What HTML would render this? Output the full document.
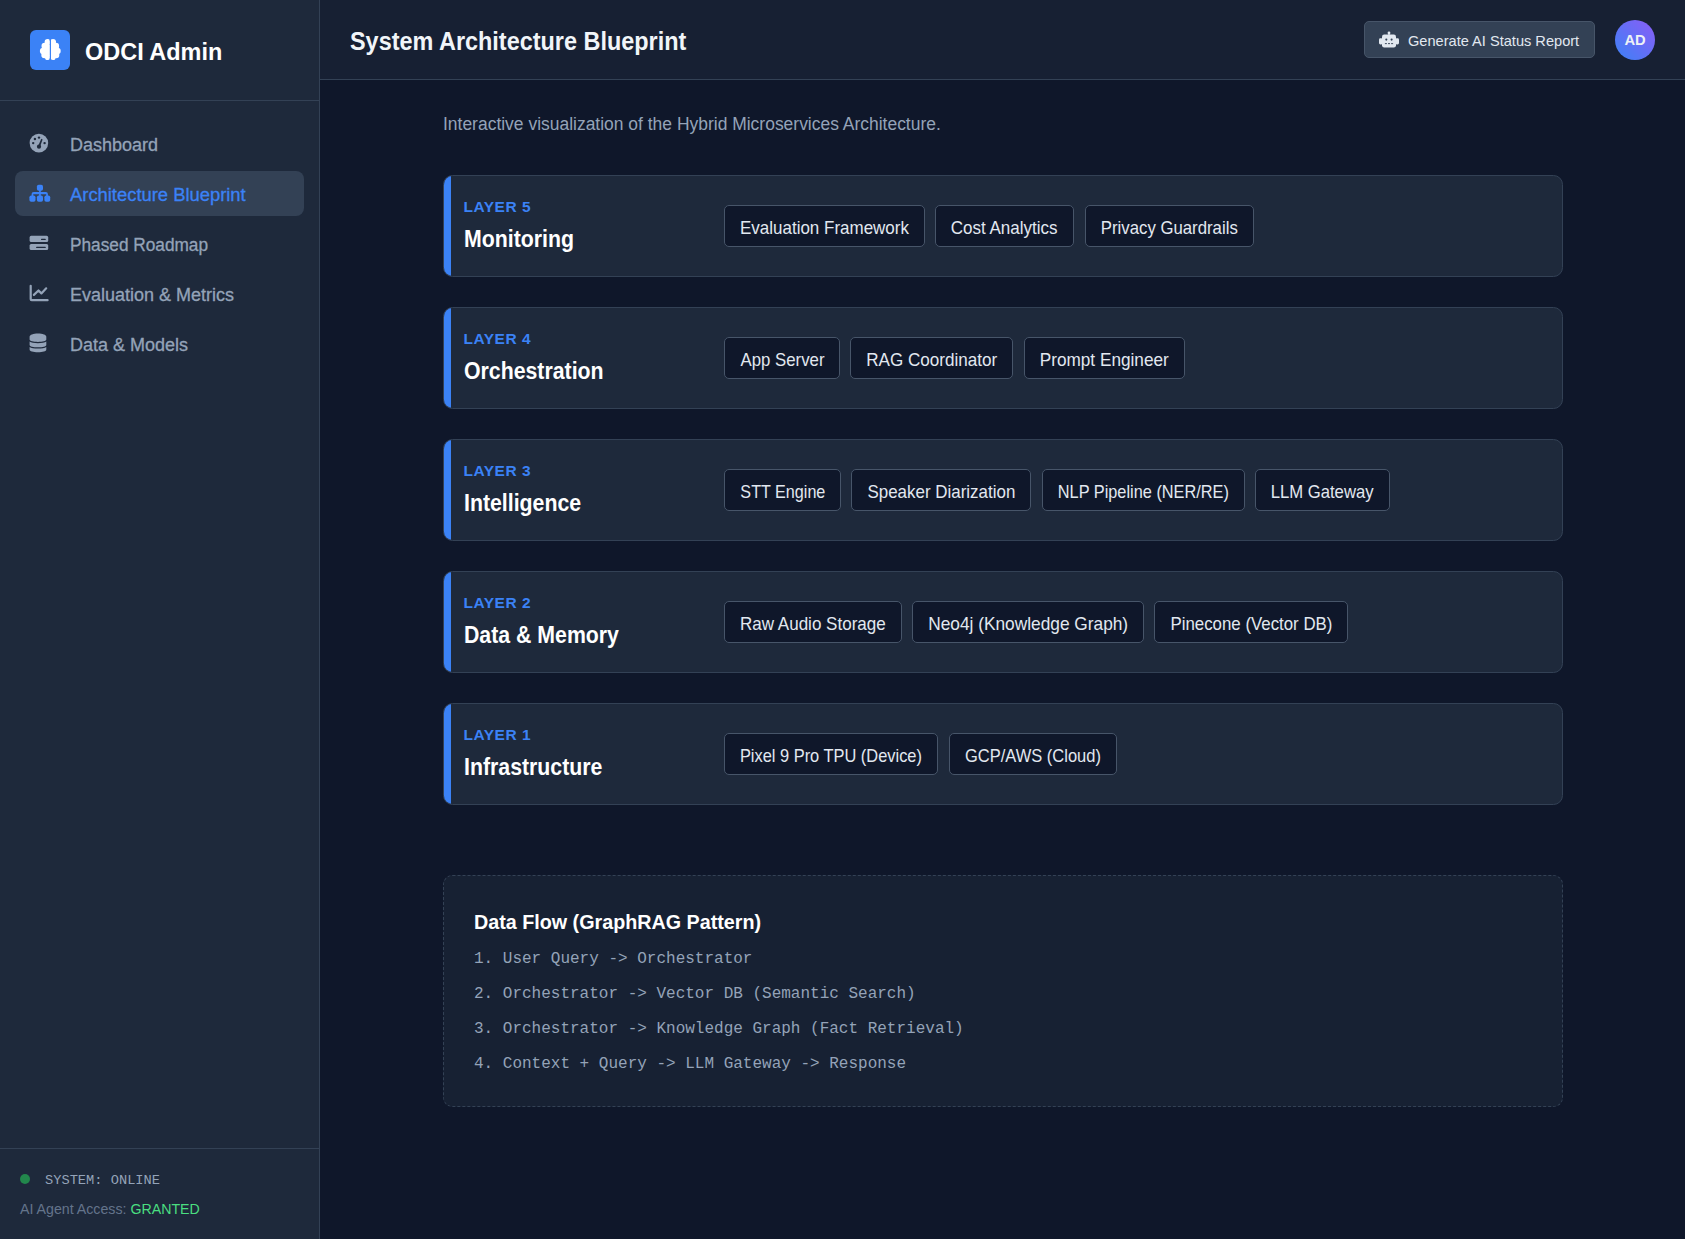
<!DOCTYPE html>
<html><head><meta charset="utf-8">
<style>
*{box-sizing:border-box;margin:0;padding:0}
html,body{width:1685px;height:1239px;overflow:hidden;background:#0f172a;font-family:"Liberation Sans",sans-serif}
.sb{position:absolute;left:0;top:0;width:320px;height:1239px;background:#1e293b;border-right:1px solid #334155}
.sbh{position:absolute;left:0;top:0;width:319px;height:101px;border-bottom:1px solid #334155}
.logo{position:absolute;left:30px;top:30px;width:40px;height:40px;border-radius:6px;background:#3b82f6}
.brand{position:absolute;left:85px;top:38px;font-size:24px;line-height:27px;transform:scaleX(0.978);transform-origin:0 0;font-weight:bold;color:#fff;white-space:nowrap}
.nav{position:absolute;left:15px;width:289px;height:45px;border-radius:8px;color:#94a3b8;font-size:18px}
.nav.act{background:#334155;color:#3b82f6}
.nav .t{position:absolute;left:55px;top:14px;line-height:21px;white-space:nowrap;-webkit-text-stroke:0.3px currentColor}
.nav svg{position:absolute}
.sbf{position:absolute;left:0;top:1148px;width:319px;height:91px;border-top:1px solid #334155}
.dot{position:absolute;left:20px;top:25.2px;width:10px;height:10px;border-radius:50%;background:#22874c}
.sys{position:absolute;left:45px;top:23.5px;font-family:"Liberation Mono",monospace;font-size:13.7px;line-height:16px;color:#94a3b8;white-space:nowrap}
.acc{position:absolute;left:20px;top:52.3px;font-size:14.2px;line-height:16px;color:#64748b;white-space:nowrap}
.acc b{font-weight:normal;color:#4ade80}
.hdr{position:absolute;left:320px;top:0;width:1365px;height:80px;background:#172033;border-bottom:1px solid #334155}
.title{position:absolute;left:30px;top:27px;font-size:25.2px;line-height:29px;transform:scaleX(0.93);transform-origin:0 0;font-weight:bold;color:#f1f5f9;white-space:nowrap}
.btn{position:absolute;left:1044px;top:21px;width:231px;height:37px;border-radius:5px;background:#334155;border:1px solid #475569;color:#e2e8f0;font-size:15px}
.btn .t{position:absolute;left:43px;top:10.5px;line-height:17px;font-size:14.6px;white-space:nowrap}
.avatar{position:absolute;left:1295px;top:20px;width:40px;height:40px;border-radius:50%;background:linear-gradient(45deg,#3b82f6,#8b5cf6);color:#eef2f6;font-weight:bold;font-size:14.7px;text-align:center;line-height:41.5px}
.sub{position:absolute;left:443px;top:114px;font-size:18px;line-height:21px;transform:scaleX(0.97);transform-origin:0 0;color:#94a3b8;white-space:nowrap}
.card{position:absolute;left:443px;width:1120px;height:102px;background:#1e293b;border:1px solid #334155;border-radius:9.5px;overflow:hidden}
.bar{position:absolute;left:0;top:0;bottom:0;width:7px;background:#3b82f6}
.lbl{position:absolute;left:19.5px;top:22px;font-size:15.5px;line-height:17px;font-weight:bold;color:#3b82f6;letter-spacing:0.5px;white-space:nowrap}
.ctitle{position:absolute;left:19.5px;top:50px;font-size:23.4px;line-height:27px;transform:scaleX(0.91);transform-origin:0 0;font-weight:bold;color:#fff;white-space:nowrap}
.chip{position:absolute;top:29px;height:42px;border:1px solid #475569;background:#0f172a;border-radius:5px;color:#e2e8f0;font-size:18.2px;line-height:21px;padding-top:11.5px;text-align:center;white-space:nowrap}
.chip span{display:inline-block;transform:scaleX(0.934)}
.flow{position:absolute;left:443px;top:875px;width:1120px;height:232px;background:#172133;border:1px dashed #334155;border-radius:9.5px}
.ftitle{position:absolute;left:30px;top:35px;font-size:20px;line-height:23px;transform:scaleX(0.986);transform-origin:0 0;font-weight:bold;color:#fff;white-space:nowrap}
.fl{position:absolute;left:30px;font-family:"Liberation Mono",monospace;font-size:16px;line-height:19px;color:#94a3b8;white-space:pre}
</style></head><body>
<div class="sb">
  <div class="sbh">
    <div class="logo"><svg width="40" height="40" viewBox="0 0 40 40" style="position:absolute;left:0;top:0"><defs><clipPath id="cl"><rect x="0" y="0" width="19.55" height="40"/></clipPath><clipPath id="cr"><rect x="21.05" y="0" width="20" height="40"/></clipPath></defs>
<g fill="#fff" clip-path="url(#cl)"><circle cx="17.6" cy="12" r="3"/><circle cx="14.7" cy="16" r="3.2"/><circle cx="13.2" cy="21" r="3.3"/><circle cx="14.5" cy="25" r="3.2"/><circle cx="17.6" cy="27.4" r="2.6"/><rect x="15" y="11" width="6" height="17"/><rect x="12" y="15" width="8" height="11"/></g>
<g fill="#fff" clip-path="url(#cr)"><circle cx="23" cy="12" r="3"/><circle cx="25.9" cy="16" r="3.2"/><circle cx="27.4" cy="21" r="3.3"/><circle cx="26.1" cy="25" r="3.2"/><circle cx="23" cy="27.4" r="2.6"/><rect x="19.6" y="11" width="6" height="17"/><rect x="20.6" y="15" width="8" height="11"/></g>
</svg></div>
    <div class="brand">ODCI Admin</div>
  </div>
  <div class="nav" style="top:121px"><svg width="22" height="22" viewBox="0 0 22 22" style="left:14px;top:11px"><circle cx="9.9" cy="11.1" r="9.3" fill="currentColor"/><g fill="#1e293b"><circle cx="4.2" cy="11.1" r="1.2"/><circle cx="5.9" cy="7" r="1.2"/><circle cx="10" cy="5.6" r="1.2"/><circle cx="15.6" cy="11.1" r="1.2"/><circle cx="10" cy="14.7" r="2.1"/><path d="M9 14.3 L12.3 6.8 L13.6 7.4 L10.9 15.1 Z"/></g></svg><div class="t">Dashboard</div></div>
  <div class="nav act" style="top:171px"><svg width="22" height="20" viewBox="0 0 22 20" style="left:14px;top:13px" fill="currentColor"><rect x="7.9" y="0.8" width="6.1" height="5.9" rx="1.8"/><rect x="0.4" y="11.5" width="6.1" height="6.3" rx="1.8"/><rect x="7.9" y="11.5" width="6.1" height="6.3" rx="1.8"/><rect x="15.4" y="11.5" width="5.8" height="6.3" rx="1.8"/><rect x="10.1" y="5.5" width="1.7" height="7"/><path d="M2.6 12.5 V10 Q2.6 7.9 4.7 7.9 H16.8 Q18.9 7.9 18.9 10 V12.5 H17.2 V10.3 H4.3 V12.5 Z"/></svg><div class="t" style="transform:scaleX(1.021);transform-origin:0 0">Architecture Blueprint</div></div>
  <div class="nav" style="top:221px"><svg width="22" height="20" viewBox="0 0 22 20" style="left:14px;top:14px"><rect x="0.6" y="0.8" width="18.6" height="6.3" rx="1.6" fill="currentColor"/><rect x="0.6" y="8.9" width="18.6" height="6.2" rx="1.6" fill="currentColor"/><rect x="12" y="3.8" width="4.8" height="1.2" rx="0.6" fill="#1e293b"/><rect x="7.1" y="11.7" width="9.7" height="1.3" rx="0.6" fill="#1e293b"/></svg><div class="t" style="transform:scaleX(0.958);transform-origin:0 0">Phased Roadmap</div></div>
  <div class="nav" style="top:271px"><svg width="22" height="20" viewBox="0 0 22 20" style="left:14px;top:13px" fill="none" stroke="currentColor" stroke-width="2.2" stroke-linecap="round" stroke-linejoin="round"><path d="M1.7 1.8 V15.2 Q1.7 16.2 2.7 16.2 H18.6"/><path d="M4.9 10.9 L9.5 6.5 L12.4 9.4 L17.2 4.3"/></svg><div class="t">Evaluation &amp; Metrics</div></div>
  <div class="nav" style="top:321px"><svg width="22" height="22" viewBox="0 0 22 22" style="left:14px;top:12px" fill="currentColor"><path d="M0.6 3.8 C0.6 1.9 4.3 0.6 8.95 0.6 C13.6 0.6 17.3 1.9 17.3 3.8 V6.6 C17.3 8.2 13.6 9 8.95 9 C4.3 9 0.6 8.2 0.6 6.6 Z"/><path d="M0.6 8.6 C2 9.7 5.3 10.3 8.95 10.3 C12.6 10.3 15.9 9.7 17.3 8.6 V11.9 C17.3 13.5 13.6 14.3 8.95 14.3 C4.3 14.3 0.6 13.5 0.6 11.9 Z"/><path d="M0.6 13.9 C2 15 5.3 15.6 8.95 15.6 C12.6 15.6 15.9 15 17.3 13.9 V16.6 C17.3 18.4 13.6 19.3 8.95 19.3 C4.3 19.3 0.6 18.4 0.6 16.6 Z"/></svg><div class="t">Data &amp; Models</div></div>
  <div class="sbf">
    <div class="dot"></div>
    <div class="sys">SYSTEM: ONLINE</div>
    <div class="acc">AI Agent Access: <b>GRANTED</b></div>
  </div>
</div>
<div class="hdr">
  <div class="title">System Architecture Blueprint</div>
  <div class="btn"><svg width="22" height="18" viewBox="0 0 22 18" style="position:absolute;left:14px;top:9px"><g fill="currentColor"><circle cx="10" cy="1.9" r="1.4"/><rect x="9.3" y="2" width="1.4" height="2.6"/><rect x="3" y="3.6" width="14" height="12.8" rx="2.2"/><rect x="0" y="7.3" width="3.6" height="6.2" rx="1.4"/><rect x="16.4" y="7.3" width="3.6" height="6.2" rx="1.4"/></g><g fill="#334155"><circle cx="7.3" cy="8.6" r="1.05"/><circle cx="12.6" cy="8.6" r="1.05"/><rect x="5.9" y="12.2" width="2" height="0.9"/><rect x="9" y="12.2" width="2" height="0.9"/><rect x="12.1" y="12.2" width="2" height="0.9"/></g></svg><div class="t">Generate AI Status Report</div></div>
  <div class="avatar">AD</div>
</div>
<div class="sub">Interactive visualization of the Hybrid Microservices Architecture.</div>
<div class="card" style="top:175px"><div class="bar"></div><div class="lbl">LAYER 5</div><div class="ctitle">Monitoring</div>
<div class="chip" style="left:280px;width:201px"><span style="transform:scaleX(0.934)">Evaluation Framework</span></div>
<div class="chip" style="left:491px;width:139px"><span style="transform:scaleX(0.936)">Cost Analytics</span></div>
<div class="chip" style="left:641px;width:169px"><span style="transform:scaleX(0.922)">Privacy Guardrails</span></div>
</div>
<div class="card" style="top:307px"><div class="bar"></div><div class="lbl">LAYER 4</div><div class="ctitle">Orchestration</div>
<div class="chip" style="left:280px;width:116px"><span style="transform:scaleX(0.923)">App Server</span></div>
<div class="chip" style="left:406px;width:163px"><span style="transform:scaleX(0.939)">RAG Coordinator</span></div>
<div class="chip" style="left:580px;width:161px"><span style="transform:scaleX(0.945)">Prompt Engineer</span></div>
</div>
<div class="card" style="top:439px"><div class="bar"></div><div class="lbl">LAYER 3</div><div class="ctitle">Intelligence</div>
<div class="chip" style="left:280px;width:117px"><span style="transform:scaleX(0.888)">STT Engine</span></div>
<div class="chip" style="left:407px;width:180px"><span style="transform:scaleX(0.932)">Speaker Diarization</span></div>
<div class="chip" style="left:598px;width:203px"><span style="transform:scaleX(0.897)">NLP Pipeline (NER/RE)</span></div>
<div class="chip" style="left:811px;width:135px"><span style="transform:scaleX(0.917)">LLM Gateway</span></div>
</div>
<div class="card" style="top:571px"><div class="bar"></div><div class="lbl">LAYER 2</div><div class="ctitle">Data &amp; Memory</div>
<div class="chip" style="left:280px;width:178px"><span style="transform:scaleX(0.937)">Raw Audio Storage</span></div>
<div class="chip" style="left:468px;width:232px"><span style="transform:scaleX(0.951)">Neo4j (Knowledge Graph)</span></div>
<div class="chip" style="left:710px;width:194px"><span style="transform:scaleX(0.926)">Pinecone (Vector DB)</span></div>
</div>
<div class="card" style="top:703px"><div class="bar"></div><div class="lbl">LAYER 1</div><div class="ctitle">Infrastructure</div>
<div class="chip" style="left:280px;width:214px"><span style="transform:scaleX(0.902)">Pixel 9 Pro TPU (Device)</span></div>
<div class="chip" style="left:505px;width:168px"><span style="transform:scaleX(0.907)">GCP/AWS (Cloud)</span></div>
</div>
<div class="flow">
  <div class="ftitle">Data Flow (GraphRAG Pattern)</div>
  <div class="fl" style="top:74px">1. User Query -&gt; Orchestrator</div>
  <div class="fl" style="top:109px">2. Orchestrator -&gt; Vector DB (Semantic Search)</div>
  <div class="fl" style="top:144px">3. Orchestrator -&gt; Knowledge Graph (Fact Retrieval)</div>
  <div class="fl" style="top:179px">4. Context + Query -&gt; LLM Gateway -&gt; Response</div>
</div>
</body></html>
